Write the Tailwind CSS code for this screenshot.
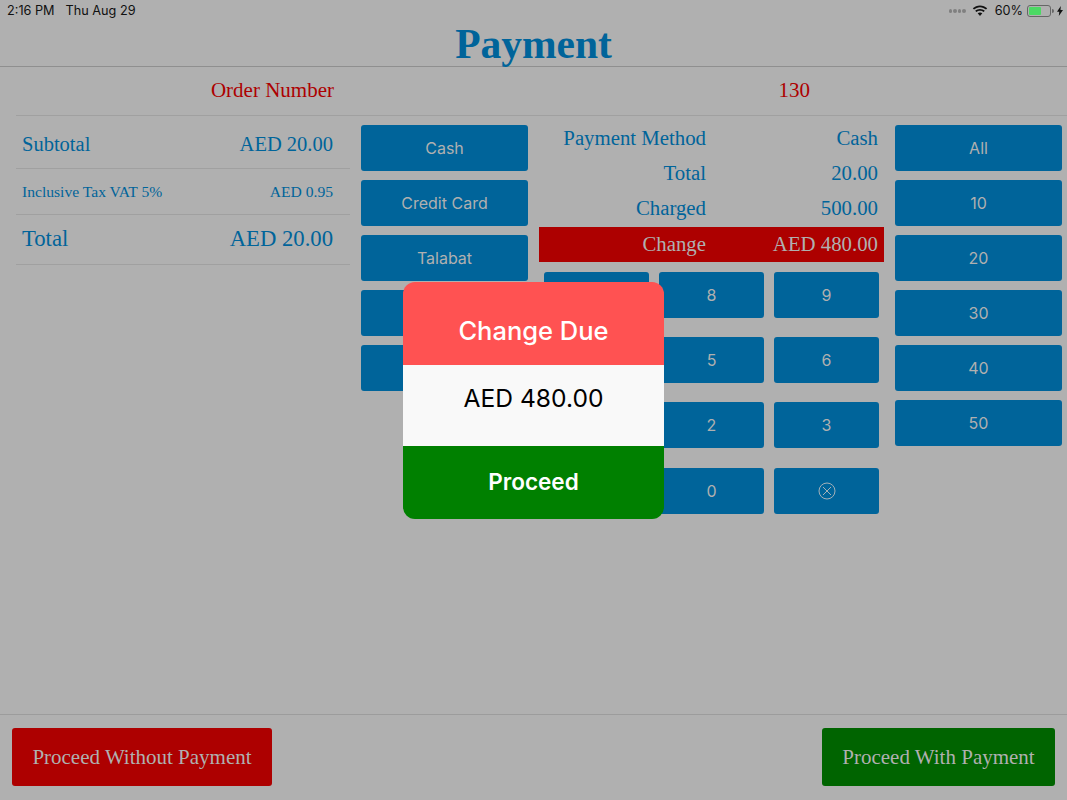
<!DOCTYPE html>
<html lang="en">
  <head>
    <meta charset="UTF-8" />
    <meta name="viewport" content="width=device-width, initial-scale=1.0" />
    <title>Payment</title>
    <script src="https://cdn.jsdelivr.net/npm/@tailwindcss/browser@4"></script>
  </head>
  <body class="bg-[#b0b0b0]">
    <div class="relative w-[1067px] h-[800px] overflow-hidden flex flex-col font-['Liberation_Serif',serif] text-[#00649a]">
      <!-- Status bar -->
      <div class="h-[22px] flex items-center justify-between pl-[7px] pr-[4px] font-['Inter',sans-serif] text-[12.7px] text-[#111]">
        <div class="flex gap-[11px]">
          <span>2:16 PM</span>
          <span>Thu Aug 29</span>
        </div>
        <div class="flex items-center">
          <span class="flex gap-[1px] mr-[6px]">
            <i class="w-[3.5px] h-[3.5px] rounded-full bg-[#808080]"></i>
            <i class="w-[3.5px] h-[3.5px] rounded-full bg-[#808080]"></i>
            <i class="w-[3.5px] h-[3.5px] rounded-full bg-[#808080]"></i>
            <i class="w-[3.5px] h-[3.5px] rounded-full bg-[#808080]"></i>
          </span>
          <svg class="w-[16px] h-[12px] mr-[7px]" viewBox="0 0 16 12" fill="#111">
            <path d="M8 2.2c2.3 0 4.4.9 6 2.4l1.2-1.3C13.300 1.500 10.800.4 8 .4S2.700 1.500.8 3.300L2 4.600c1.600-1.500 3.700-2.400 6-2.400z" />
            <path d="M8 5.700c1.400 0 2.600.5 3.600 1.400l1.200-1.300C11.500 4.600 9.800 3.900 8 3.900s-3.500.7-4.800 1.900l1.200 1.300c1-.9 2.200-1.400 3.600-1.400z" />
            <path d="M8 7.400c-.9 0-1.700.3-2.300.9L8 11l2.300-2.700c-.6-.6-1.400-.9-2.300-.9z" />
          </svg>
          <span class="mr-[4px]">60%</span>
          <div class="w-[24px] h-[12px] rounded-[3px] border border-[#666] p-[1px]">
            <div class="w-[60%] h-full rounded-[1px] bg-[#4cd964]"></div>
          </div>
          <i class="w-[2px] h-[4px] ml-[1px] mr-[3px] rounded-r-sm bg-[#666]"></i>
          <svg class="w-[6px] h-[10px]" viewBox="0 0 6 10" fill="#111"><path d="M3.800 0 0 5.700h2.300L1.800 10 6 4.100H3.500z" /></svg>
        </div>
      </div>

      <!-- Title -->
      <div class="h-[45px] pt-[1px] border-b border-[#8f8f8f] flex items-center justify-center">
        <h1 class="text-[41.5px] leading-none font-bold">Payment</h1>
      </div>

      <!-- Order number -->
      <div class="ml-[16px] h-[49px] border-b border-[#a0a0a0] grid grid-cols-2 items-center text-[21px] text-[#ad0000]">
        <div class="w-[318px] text-right">Order Number</div>
        <div class="text-center pr-[20px]">130</div>
      </div>

      <div class="flex-1 flex pl-[16px] pr-[5px]">
        <!-- Totals -->
        <div class="w-[334px]">
          <div class="h-[53px] pl-[6px] pr-[17px] pt-[4px] border-b border-[#a0a0a0] flex items-center justify-between text-[20.5px]">
            <span>Subtotal</span><span>AED 20.00</span>
          </div>
          <div class="h-[46px] pl-[6px] pr-[17px] border-b border-[#a0a0a0] flex items-center justify-between text-[15.6px]">
            <span>Inclusive Tax VAT 5%</span><span>AED 0.95</span>
          </div>
          <div class="h-[50px] pl-[6px] pr-[17px] border-b border-[#a0a0a0] flex items-center justify-between text-[22.7px]">
            <span>Total</span><span>AED 20.00</span>
          </div>
        </div>

        <!-- Payment methods -->
        <div class="w-[167px] ml-[11px] pt-[9px] flex flex-col gap-[9px] font-['Inter',sans-serif] text-[16px] text-[#b0b0b0]">
          <button class="h-[46px] rounded-[3px] bg-[#00649a]">Cash</button>
          <button class="h-[46px] rounded-[3px] bg-[#00649a]">Credit Card</button>
          <button class="h-[46px] rounded-[3px] bg-[#00649a]">Talabat</button>
          <button class="h-[46px] rounded-[3px] bg-[#00649a]"></button>
          <button class="h-[46px] rounded-[3px] bg-[#00649a]"></button>
        </div>

        <!-- Summary and keypad -->
        <div class="w-[345px] ml-[11px]">
          <div class="h-[111px] pt-[4px] text-[20.8px]">
            <div class="h-[35px] grid grid-cols-[167px_172px] items-center text-right"><span>Payment Method</span><span>Cash</span></div>
            <div class="h-[35px] grid grid-cols-[167px_172px] items-center text-right"><span>Total</span><span>20.00</span></div>
            <div class="h-[35px] grid grid-cols-[167px_172px] items-center text-right"><span>Charged</span><span>500.00</span></div>
          </div>
          <div class="h-[35px] pb-[1px] bg-[#ad0000] grid grid-cols-[167px_172px] items-center text-right text-[20.8px] text-[#b0b0b0]">
            <span>Change</span><span>AED 480.00</span>
          </div>
          <div class="mt-[10px] mx-[5px] grid grid-cols-[105px_105px_105px] gap-x-[10px] font-['Inter',sans-serif] text-[16px] text-[#b0b0b0]">
            <button class="h-[46px] rounded-[3px] bg-[#00649a]">7</button>
            <button class="h-[46px] rounded-[3px] bg-[#00649a]">8</button>
            <button class="h-[46px] rounded-[3px] bg-[#00649a]">9</button>
            <button class="h-[46px] mt-[19px] rounded-[3px] bg-[#00649a]">4</button>
            <button class="h-[46px] mt-[19px] rounded-[3px] bg-[#00649a]">5</button>
            <button class="h-[46px] mt-[19px] rounded-[3px] bg-[#00649a]">6</button>
            <button class="h-[46px] mt-[19px] rounded-[3px] bg-[#00649a]">1</button>
            <button class="h-[46px] mt-[19px] rounded-[3px] bg-[#00649a]">2</button>
            <button class="h-[46px] mt-[19px] rounded-[3px] bg-[#00649a]">3</button>
            <button class="h-[46px] mt-[20px] rounded-[3px] bg-[#00649a]">.</button>
            <button class="h-[46px] mt-[20px] rounded-[3px] bg-[#00649a]">0</button>
            <button class="h-[46px] mt-[20px] rounded-[3px] bg-[#00649a] flex items-center justify-center">
              <svg class="w-[18px] h-[18px]" viewBox="0 0 18 18" fill="none" stroke="#a3b0b8" stroke-width="1">
                <circle cx="9" cy="9" r="8" />
                <path d="M5 5l8 8M13 5l-8 8" />
              </svg>
            </button>
          </div>
        </div>

        <!-- Quick amounts -->
        <div class="w-[167px] ml-[11px] pt-[9px] flex flex-col gap-[9px] font-['Inter',sans-serif] text-[16px] text-[#b0b0b0]">
          <button class="h-[46px] rounded-[3px] bg-[#00649a]">All</button>
          <button class="h-[46px] rounded-[3px] bg-[#00649a]">10</button>
          <button class="h-[46px] rounded-[3px] bg-[#00649a]">20</button>
          <button class="h-[46px] rounded-[3px] bg-[#00649a]">30</button>
          <button class="h-[46px] rounded-[3px] bg-[#00649a]">40</button>
          <button class="h-[46px] rounded-[3px] bg-[#00649a]">50</button>
        </div>
      </div>

      <!-- Footer -->
      <div class="h-[86px] border-t border-[#9c9c9c] pt-[13px] pl-[12px] pr-[12px] flex justify-between items-start text-[21px] text-[#b0b0b0]">
        <button class="w-[260px] h-[58px] pt-[2px] rounded-[3px] bg-[#ad0000]">Proceed Without Payment</button>
        <button class="w-[233px] h-[58px] pt-[2px] rounded-[3px] bg-[#006400]">Proceed With Payment</button>
      </div>

      <!-- Change due dialog -->
      <div class="absolute left-[403px] top-[282px] w-[261px] h-[237px] rounded-[12px] overflow-hidden flex flex-col font-['Inter',sans-serif]">
        <div class="h-[83px] pt-[15px] bg-[#ff5252] flex items-center justify-center text-[25.5px] font-medium text-white">Change Due</div>
        <div class="h-[81px] pb-[14px] bg-[#f9f9f9] flex items-center justify-center text-[24.6px] text-black">AED 480.00</div>
        <div class="h-[73px] pb-[2px] bg-[#008000] flex items-center justify-center text-[22.5px] font-semibold text-white">Proceed</div>
      </div>
    </div>
  </body>
</html>
